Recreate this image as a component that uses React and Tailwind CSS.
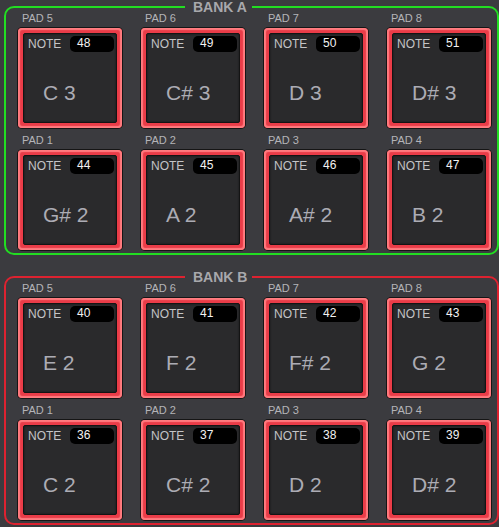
import React from "react";

const banks = [
  {
    name: "BANK A",
    border: "border-[#22dd22]",
    rows: [
      [
        ["PAD 5", 48, "C 3"],
        ["PAD 6", 49, "C# 3"],
        ["PAD 7", 50, "D 3"],
        ["PAD 8", 51, "D# 3"],
      ],
      [
        ["PAD 1", 44, "G# 2"],
        ["PAD 2", 45, "A 2"],
        ["PAD 3", 46, "A# 2"],
        ["PAD 4", 47, "B 2"],
      ],
    ],
  },
  {
    name: "BANK B",
    border: "border-[#dd2230]",
    rows: [
      [
        ["PAD 5", 40, "E 2"],
        ["PAD 6", 41, "F 2"],
        ["PAD 7", 42, "F# 2"],
        ["PAD 8", 43, "G 2"],
      ],
      [
        ["PAD 1", 36, "C 2"],
        ["PAD 2", 37, "C# 2"],
        ["PAD 3", 38, "D 2"],
        ["PAD 4", 39, "D# 2"],
      ],
    ],
  },
];

function Pad({ label, note, name }) {
  return (
    <div className="flex flex-col">
      <div className="h-[15px] pl-[5px] text-[11px] leading-[12px] text-[#b4b4b8]">{label}</div>
      <div className="w-[106px] h-[102px] rounded-[5px] bg-[#151515] p-[1px]">
        <div className="h-full w-full rounded-[4px] bg-[#ea3c48] p-[5px] shadow-[inset_0_0_1px_2px_#ff7c80]">
          <div className="h-full w-full rounded-[2px] border border-[#141414] bg-[#2a2a2c] shadow-[inset_0_0_2px_rgba(0,0,0,0.6)]">
            <div className="flex items-center pl-[4px] pr-[2px] pt-[2px]">
              <span className="w-[42px] text-[12px] leading-[16px] text-[#c4c4c6]">NOTE</span>
              <span className="flex-1 h-[16px] rounded-[5px] bg-black pl-[7px] text-[12px] leading-[15px] text-[#f2f2f2]">
                {note}
              </span>
            </div>
            <div className="mt-[29px] pl-[19px] text-[21px] leading-[24px] text-[#acacb4]">{name}</div>
          </div>
        </div>
      </div>
    </div>
  );
}

export default function App() {
  return (
    <div
      className="w-[499px] h-[527px] overflow-hidden bg-[#3b3b3f]"
      style={{ fontFamily: '"Liberation Sans", Arial, sans-serif' }}
    >
      {banks.map((bank, i) => (
        <fieldset
          key={bank.name}
          className={`ml-[4px] w-[495px] rounded-[10px] border-2 ${bank.border} px-0 pb-[2px] ${i === 1 ? "mt-[15px]" : ""}`}
        >
          <legend className="ml-[179px] w-[67px] pl-[8px] text-[14px] font-bold leading-[14px] text-[#a8a8ac]">
            {bank.name}
          </legend>
          <div className="-mt-[2px] flex flex-col gap-[5px] pl-[11px]">
            {bank.rows.map((row, r) => (
              <div key={r} className="flex gap-[17px]">
                {row.map(([label, note, name]) => (
                  <Pad key={label} label={label} note={note} name={name} />
                ))}
              </div>
            ))}
          </div>
        </fieldset>
      ))}
    </div>
  );
}
